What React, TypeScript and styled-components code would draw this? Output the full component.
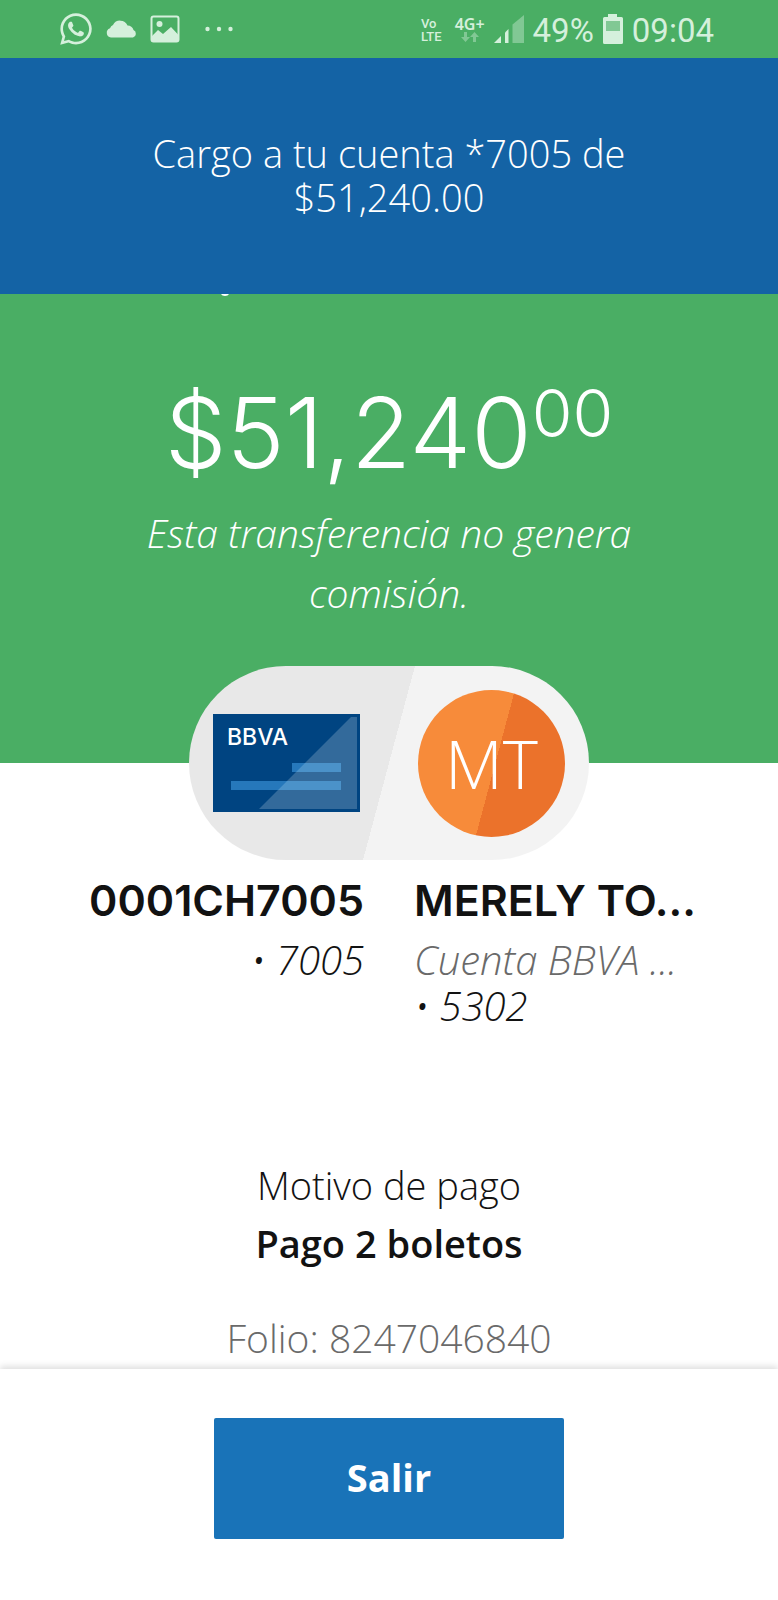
import React from "react";
import styled, { createGlobalStyle } from "styled-components";
import { FaWhatsapp } from "react-icons/fa";

const GlobalStyle = createGlobalStyle`
  *, *::before, *::after { box-sizing: border-box; }
  body {
    margin: 0;
    background: #fff;
    color: #121212;
    font-family: "Open Sans", "Noto Sans", sans-serif;
    font-weight: 300;
  }
  h1, h2, p { margin: 0; font-weight: inherit; }
`;

const Screen = styled.div`
  display: flex;
  flex-direction: column;
  min-height: 100vh;
`;

const StatusBar = styled.div`
  display: flex;
  align-items: center;
  justify-content: space-between;
  height: 58px;
  padding: 0 64px 0 58px;
  background: #4aae64;
  color: #d5f0dc;
`;

const StatusGroup = styled.div<{ $gap: number }>`
  display: flex;
  align-items: center;
  gap: ${(p) => p.$gap}px;
`;

const NetworkLabel = styled.div`
  padding: 2px 4px 0 0;
  font: 500 13px/13px "Roboto", sans-serif;
`;

const NetworkType = styled.div`
  display: flex;
  flex-direction: column;
  align-items: center;
  font: 600 16px/16px "Noto Sans", sans-serif;
`;

const StatusText = styled.span`
  padding-top: 4px;
  font: 400 33px/40px "Roboto", sans-serif;
`;

const Banner = styled.div`
  height: 236px;
  padding: 73px 120px 0;
  background: #1463a5;
  color: #fff;
  font-size: 38px;
  line-height: 44px;
  text-align: center;
`;

const Summary = styled.section`
  display: flex;
  flex-direction: column;
  align-items: center;
  height: 469px;
  padding: 0 120px;
  background: #4aae64;
  color: #fff;
  text-align: center;
`;

const HiddenHeadingEdge = styled.svg`
  display: block;
  align-self: flex-start;
  margin-left: 101px;
`;

const Amount = styled.h1`
  display: flex;
  align-items: flex-start;
  margin-top: 70px;
  font-family: "Inter", "Open Sans", sans-serif;
  font-size: 98px;
  line-height: 134px;
`;

const Cents = styled.span`
  font-size: 66px;
  line-height: 94px;
`;

const Fee = styled.p`
  padding-top: 3px;
  font-size: 39px;
  line-height: 60px;
  font-style: italic;
`;

const Details = styled.main`
  flex: 1;
  display: flex;
  flex-direction: column;
  align-items: center;
`;

const Parties = styled.div`
  position: relative;
  display: flex;
  align-items: center;
  justify-content: space-between;
  width: 400px;
  height: 194px;
  margin-top: -97px;
  padding: 0 24px;
  border-radius: 97px;
  background: linear-gradient(105deg, #e8e8e8 50%, #f3f3f3 50%);
`;

const Card = styled.div`
  position: relative;
  width: 147px;
  height: 98px;
  background: #004481;
  color: #fff;
`;

const CardArt = styled.svg`
  display: block;
`;

const CardBrand = styled.span`
  position: absolute;
  top: 11px;
  left: 14px;
  font: 500 23px/24px "Inter", sans-serif;
`;

const Avatar = styled.div`
  display: flex;
  align-items: center;
  justify-content: center;
  width: 147px;
  height: 147px;
  border-radius: 50%;
  background: linear-gradient(105deg, #f78b3a 52%, #eb722b 52%);
  color: #fff;
  font-size: 67px;
  line-height: 88px;
`;

const Accounts = styled.div`
  display: grid;
  grid-template-columns: 1fr 1fr;
  column-gap: 50px;
  width: 100%;
  padding: 10px 80px 0;
`;

const Account = styled.div<{ $align: "left" | "right" }>`
  min-width: 0;
  text-align: ${(p) => p.$align};
`;

const AccountName = styled.h2`
  font-family: "Inter", "Open Sans", sans-serif;
  font-size: 43px;
  line-height: 60px;
  font-weight: 600;
  white-space: nowrap;
`;

const AccountLines = styled.div`
  padding-top: 7px;
`;

const AccountLine = styled.p<{ $muted?: boolean }>`
  color: ${(p) => (p.$muted ? "#6a6a6a" : "#121212")};
  font-size: 40px;
  line-height: 46px;
  font-style: italic;
  white-space: nowrap;
`;

const Reason = styled.div`
  margin-top: 127px;
  font-size: 38px;
  line-height: 58px;
  text-align: center;
`;

const ReasonValue = styled.p`
  font-weight: 600;
`;

const Folio = styled.p`
  margin-top: 37px;
  color: #6a6a6a;
  font-size: 39px;
  line-height: 58px;
`;

const Footer = styled.footer`
  display: flex;
  justify-content: center;
  padding: 49px 24px 61px;
  background: #fff;
  box-shadow: 0 -3px 6px rgba(0, 0, 0, 0.12);
`;

const ExitButton = styled.button`
  width: 350px;
  height: 121px;
  padding: 0 0 4px;
  border: 0;
  border-radius: 2px;
  background: #1973b8;
  color: #fff;
  font: 700 38px/58px "Open Sans", "Noto Sans", sans-serif;
  cursor: pointer;
`;

function CloudIcon() {
  return (
    <svg width="32" height="20" viewBox="0 0 32 20" fill="currentColor" aria-hidden="true">
      <path d="M5 18.500a4.800 4.800 0 0 1-1-9.300A6 6 0 0 1 7 6 8 8 0 0 1 21.500 6.500a6.500 6.500 0 0 1 6 4.500A4 4 0 0 1 27 18.500z" />
    </svg>
  );
}

function ImageIcon() {
  return (
    <svg width="30" height="28" viewBox="0 0 30 28" aria-hidden="true">
      <rect x="1.500" y="1.500" width="27" height="25" rx="2" fill="none" stroke="currentColor" strokeWidth="2" />
      <circle cx="9.500" cy="9" r="3" fill="currentColor" />
      <path d="M2 21l6-6 5 4 8-7 7 7.500v7H2z" fill="currentColor" />
    </svg>
  );
}

function MoreIcon() {
  return (
    <svg width="30" height="6" viewBox="0 0 30 6" fill="currentColor" aria-hidden="true">
      <circle cx="3.500" cy="3" r="2.200" />
      <circle cx="15" cy="3" r="2.200" />
      <circle cx="26.500" cy="3" r="2.200" />
    </svg>
  );
}

function DataArrows() {
  return (
    <svg width="18" height="10" viewBox="0 0 18 10" fill="currentColor" opacity="0.4" aria-hidden="true">
      <path d="M3 0h3v5h3l-4.500 5L0 5h3z" />
      <path d="M12 10h3V5h3l-4.500-5L9 5h3z" />
    </svg>
  );
}

function SignalIcon() {
  return (
    <svg width="30" height="30" viewBox="0 0 30 30" fill="currentColor" aria-hidden="true">
      <path d="M0 29l7-7v7z" />
      <path d="M11 18.500l3.500-3.500v14H11z" />
      <path d="M18.500 10.500L30 1v28H18.500z" opacity="0.4" />
    </svg>
  );
}

function BatteryIcon() {
  return (
    <svg width="20" height="30" viewBox="0 0 20 30" fill="currentColor" aria-hidden="true">
      <path
        d="M5 0h9v3h4.500q1.500 0 1.500 1.500v24q0 1.500-1.500 1.500h-17Q0 30 0 28.500v-24Q0 3 1.500 3H5zM3 7v10h14V7z"
        fillRule="evenodd"
      />
      <rect x="3" y="7" width="14" height="10" opacity="0.4" />
    </svg>
  );
}

export default function App() {
  return (
    <Screen>
      <GlobalStyle />
      <StatusBar>
        <StatusGroup $gap={12}>
          <FaWhatsapp size={36} aria-hidden="true" />
          <CloudIcon />
          <ImageIcon />
          <span />
          <MoreIcon />
        </StatusGroup>
        <StatusGroup $gap={9}>
          <NetworkLabel>
            Vo
            <br />
            LTE
          </NetworkLabel>
          <NetworkType>
            4G+
            <DataArrows />
          </NetworkType>
          <SignalIcon />
          <StatusText>49%</StatusText>
          <BatteryIcon />
          <StatusText>09:04</StatusText>
        </StatusGroup>
      </StatusBar>
      <Banner role="status">Cargo a tu cuenta *7005 de $51,240.00</Banner>
      <Summary>
        <HiddenHeadingEdge width="8" height="2" viewBox="0 0 8 2" aria-hidden="true">
          <path d="M0 0h8q-1 2-4 2T0 0z" fill="#fff" />
        </HiddenHeadingEdge>
        <Amount>
          $51,240<Cents>00</Cents>
        </Amount>
        <Fee>Esta transferencia no genera comisión.</Fee>
      </Summary>
      <Details>
        <Parties>
          <Card>
            <CardArt width="147" height="98" viewBox="0 0 147 98" aria-hidden="true">
              <path d="M46 95L138 3h6v92z" fill="#336a9b" />
              <rect x="79" y="49" width="49" height="9" fill="#2678bb" />
              <rect x="18" y="67" width="110" height="9" fill="#2678bb" />
              <path d="M92 49h36v9H83zM74 67h54v9H65z" fill="#4b92c9" />
            </CardArt>
            <CardBrand>BBVA</CardBrand>
          </Card>
          <Avatar>MT</Avatar>
        </Parties>
        <Accounts>
          <Account $align="right">
            <AccountName>0001CH7005</AccountName>
            <AccountLines>
              <AccountLine>• 7005</AccountLine>
            </AccountLines>
          </Account>
          <Account $align="left">
            <AccountName>MERELY TO...</AccountName>
            <AccountLines>
              <AccountLine $muted>Cuenta BBVA ...</AccountLine>
              <AccountLine>• 5302</AccountLine>
            </AccountLines>
          </Account>
        </Accounts>
        <Reason>
          <p>Motivo de pago</p>
          <ReasonValue>Pago 2 boletos</ReasonValue>
        </Reason>
        <Folio>Folio: 8247046840</Folio>
      </Details>
      <Footer>
        <ExitButton type="button">Salir</ExitButton>
      </Footer>
    </Screen>
  );
}
